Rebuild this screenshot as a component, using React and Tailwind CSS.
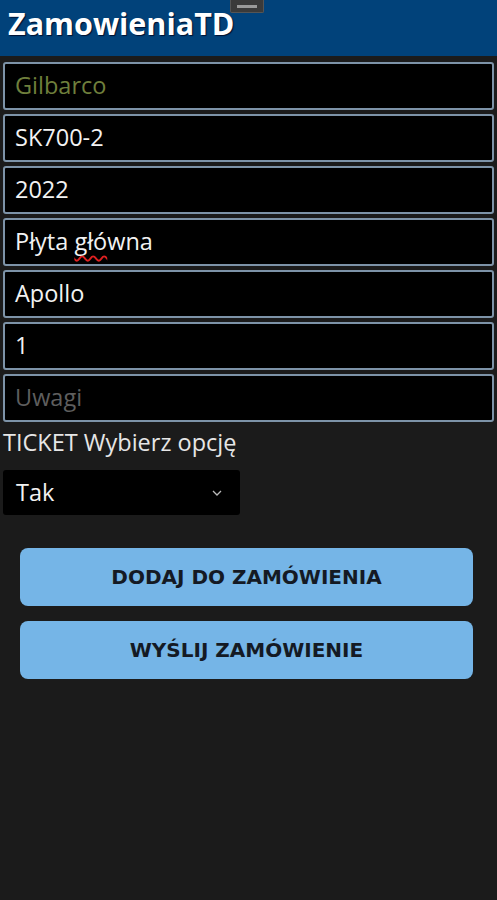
import { useState } from 'react';

const fields = [
  { value: 'Gilbarco', color: 'text-[#6f7f3c]' },
  { value: 'SK700-2' },
  { value: '2022' },
  { value: 'Płyta główna', spell: true },
  { value: 'Apollo' },
  { value: '1' },
  { value: '', placeholder: 'Uwagi' },
];

export default function App() {
  const [ticket, setTicket] = useState('Tak');

  return (
    <div className="min-h-[900px] bg-[#1b1b1b] font-['Open_Sans',sans-serif]">
      <header className="relative h-[56px] bg-[#01427a] px-2 pt-[2px]">
        <h1 className="text-[30.5px] font-bold leading-[42px] text-white [text-shadow:1px_1px_1px_#001030]">
          ZamowieniaTD
        </h1>
        <div className="absolute left-[230px] top-0 flex h-[13px] w-[34px] items-center justify-center rounded-b-[2px] border border-t-0 border-[#555] bg-[#3a3a3a]">
          <div className="h-[3px] w-[20px] bg-[#9a9a9a]" />
        </div>
      </header>

      <div className="flex flex-col gap-[4px] px-[3px] pt-[6px]">
        {fields.map((f, i) => (
          <div
            key={i}
            className="flex h-[48px] items-center rounded-[3px] border-2 border-[#7d93a8] bg-black px-[10px]"
          >
            {f.value ? (
              <span className={`text-[23.5px] ${f.color || 'text-[#f2f2f2]'}`}>
                {f.spell ? (
                  <>
                    Płyta <span className="underline decoration-wavy decoration-[#e02020] decoration-2 underline-offset-[5px]">głó</span>wna
                  </>
                ) : (
                  f.value
                )}
              </span>
            ) : (
              <span className="text-[23.5px] text-[#5e5e5e]">{f.placeholder}</span>
            )}
          </div>
        ))}
      </div>

      <div className="px-[3px] pt-[2px]">
        <p className="text-[23.5px] leading-[36px] text-[#e6e6e6]">TICKET Wybierz opcję</p>
        <button
          onClick={() => setTicket(ticket === 'Tak' ? 'Nie' : 'Tak')}
          className="mt-[10px] flex h-[45px] w-[237px] items-center justify-between rounded-[3px] bg-black pl-[13px] pr-[18px]"
        >
          <span className="text-[23.5px] text-[#f2f2f2]">{ticket}</span>
          <svg width="10" height="6" viewBox="0 0 10 6" fill="none">
            <path d="M1 1l4 4 4-4" stroke="#bbbbbb" strokeWidth="1.3" />
          </svg>
        </button>
      </div>

      <div className="flex flex-col gap-[15px] pl-[20px] pr-[24px] pt-[33px]">
        <button className="h-[58px] rounded-[8px] bg-[#75b5e7] text-[20px] font-bold text-[#141a24] font-['DejaVu_Sans',sans-serif]">
          DODAJ DO ZAMÓWIENIA
        </button>
        <button className="h-[58px] rounded-[8px] bg-[#75b5e7] text-[20px] font-bold text-[#141a24] font-['DejaVu_Sans',sans-serif]">
          WYŚLIJ ZAMÓWIENIE
        </button>
      </div>
    </div>
  );
}
